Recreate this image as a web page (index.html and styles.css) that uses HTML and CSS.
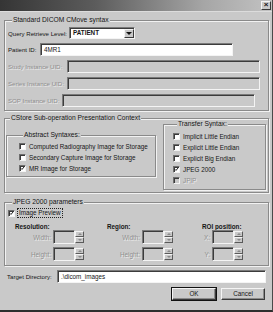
FILE: index.html
```html
<!DOCTYPE html>
<html lang="en">
<head>
    <meta charset="UTF-8">
    <title>DICOM CMove</title>
    <link rel="stylesheet" href="styles.css">
</head>
<body>

<div class="window">
    <div class="titlebar"><span class="close">&#215;</span></div>

    <div class="content">
        <fieldset class="group g-cmove">
            <legend>Standard DICOM CMove syntax</legend>
            <div class="row">
                <span class="lbl w-qrl">Query Retrieve Level:</span>
                <div class="select">PATIENT<span class="drop"><span class="tri"></span></span></div>
            </div>
            <div class="row">
                <span class="lbl w-pid">Patient ID:</span>
                <div class="field">4MR1</div>
            </div>
            <div class="row">
                <span class="lbl w-uid off">Study Instance UID:</span>
                <div class="field dis"></div>
            </div>
            <div class="row">
                <span class="lbl w-uid off">Series Instance UID:</span>
                <div class="field dis"></div>
            </div>
            <div class="row">
                <span class="lbl w-sop off">SOP Instance UID:</span>
                <div class="field dis"></div>
            </div>
        </fieldset>

        <fieldset class="group g-cstore">
            <legend>CStore Sub-operation Presentation Context</legend>
            <div class="split">
                <fieldset class="group g-abstract">
                    <legend>Abstract Syntaxes:</legend>
                    <div class="check"><span class="box"></span>Computed Radiography Image for Storage</div>
                    <div class="check"><span class="box"></span>Secondary Capture Image for Storage</div>
                    <div class="check"><span class="box"><svg viewBox="0 0 7 7"><polyline points="1.3,3.2 2.8,4.8 5.6,1.4"/></svg></span>MR Image for Storage</div>
                </fieldset>
                <fieldset class="group g-transfer">
                    <legend>Transfer Syntax:</legend>
                    <div class="check"><span class="box"></span>Implicit Little Endian</div>
                    <div class="check"><span class="box"></span>Explicit Little Endian</div>
                    <div class="check"><span class="box"></span>Explicit Big Endian</div>
                    <div class="check"><span class="box"><svg viewBox="0 0 7 7"><polyline points="1.3,3.2 2.8,4.8 5.6,1.4"/></svg></span>JPEG 2000</div>
                    <div class="check off"><span class="box dis"></span>JPIP</div>
                </fieldset>
            </div>
        </fieldset>

        <fieldset class="group g-jpeg">
            <legend>JPEG 2000 parameters</legend>
            <div class="check preview"><span class="box"><svg viewBox="0 0 7 7"><polyline points="1.3,3.2 2.8,4.8 5.6,1.4"/></svg></span><span class="focus">Image Preview</span></div>
            <div class="cols">
                <div class="col c-res">
                    <div class="head">Resolution:</div>
                    <div class="spin-row"><span class="slbl off">Width:</span><span class="spin"><span class="sbox"></span><span class="arrows"><span class="up"></span><span class="down"></span></span></span></div>
                    <div class="spin-row"><span class="slbl off">Height:</span><span class="spin"><span class="sbox"></span><span class="arrows"><span class="up"></span><span class="down"></span></span></span></div>
                </div>
                <div class="col c-reg">
                    <div class="head">Region:</div>
                    <div class="spin-row"><span class="slbl off">Width:</span><span class="spin"><span class="sbox"></span><span class="arrows"><span class="up"></span><span class="down"></span></span></span></div>
                    <div class="spin-row"><span class="slbl off">Height:</span><span class="spin"><span class="sbox"></span><span class="arrows"><span class="up"></span><span class="down"></span></span></span></div>
                </div>
                <div class="col c-roi">
                    <div class="head">ROI position:</div>
                    <div class="spin-row"><span class="slbl off">X:</span><span class="spin"><span class="sbox"></span><span class="arrows"><span class="up"></span><span class="down"></span></span></span></div>
                    <div class="spin-row"><span class="slbl off">Y:</span><span class="spin"><span class="sbox"></span><span class="arrows"><span class="up"></span><span class="down"></span></span></span></div>
                </div>
            </div>
        </fieldset>

        <div class="target">
            <span class="lbl w-tgt">Target Directory:</span>
            <div class="field f-tgt">.\dicom_images</div>
        </div>

        <div class="buttons">
            <div class="btn default">OK</div>
            <div class="btn">Cancel</div>
        </div>
    </div>
</div>

</body>
</html>
```

FILE: styles.css
```css
* {
    box-sizing: border-box;
    margin: 0;
    padding: 0;
}
body {
    width: 273px;
    height: 312px;
    overflow: hidden;
    background: #c9c9c9;
    font-family: 'Liberation Sans', Arial, sans-serif;
    font-size: 6.3px;
    color: #151515;
}
.window {
    height: 312px;
    display: flex;
    flex-direction: column;
    border-right: 1px solid #4a4a4a;
    border-bottom: 2px solid #2e2e2e;
}
.titlebar {
    height: 12px;
    flex: none;
    display: flex;
    justify-content: flex-end;
    align-items: center;
    padding-right: 1px;
    background: linear-gradient(to right, #353535, #5c5c5c 35%, #a6a6a6 75%, #c2c2c2);
    border-bottom: 1px solid #dcdcdc;
}
.close {
    width: 10px;
    height: 9px;
    background: #c9c9c9;
    border: 1px solid;
    border-color: #f4f4f4 #3a3a3a #3a3a3a #f4f4f4;
    font-size: 8px;
    line-height: 6px;
    text-align: center;
    font-weight: bold;
}
.content {
    display: flex;
    flex-direction: column;
    padding: 4px 4px 0 4px;
}

/* etched group boxes */
.group {
    border: 1px solid #8a8a8a;
    box-shadow: inset 1px 1px 0 #f2f2f2, 1px 1px 0 #f2f2f2;
}
.group legend {
    margin-left: 4px;
    padding: 0 1px;
    font-size: 6.7px;
    line-height: 8px;
    background: #c9c9c9;
}
.g-cmove {
    width: 265px;
    padding: 3px 0 3px 3px;
}
.g-cstore {
    width: 265px;
    margin-top: 3px;
    padding: 0 0 2px 1px;
}
.g-jpeg {
    width: 265px;
    margin-top: 5px;
    padding: 2px 0 4px 3px;
}
.split {
    display: flex;
    align-items: flex-start;
    margin-top: -2px;
}
.g-abstract {
    width: 150px;
    margin-top: 11px;
    padding: 2px 0 2px 12px;
}
.g-transfer {
    width: 103px;
    margin-left: 7px;
    padding: 3px 0 3px 9px;
}

/* text rows */
.row {
    display: flex;
    align-items: center;
    height: 13px;
    margin-bottom: 4px;
}
.row:first-of-type {
    height: 12px;
}
.row:last-child {
    margin-bottom: 0;
}
.lbl {
    flex: none;
    white-space: nowrap;
    font-size: 6.1px;
}
.w-qrl { width: 61px; }
.w-pid { width: 32px; }
.w-uid { width: 59px; }
.w-sop { width: 54px; }
.w-tgt { width: 50px; }
.off {
    color: #8e8e8e;
    text-shadow: 1px 1px 0 #ececec;
}
.field {
    width: 193px;
    height: 13px;
    padding: 0 3px;
    line-height: 11px;
    background: #fff;
    border: 1px solid;
    border-color: #7a7a7a #f4f4f4 #f4f4f4 #7a7a7a;
    box-shadow: inset 1px 1px 0 #3c3c3c;
}
.field.dis {
    background: #c9c9c9;
}
.select {
    position: relative;
    width: 66px;
    height: 12px;
    padding: 0 3px;
    line-height: 10px;
    font-weight: bold;
    background: #fff;
    border: 1px solid;
    border-color: #7a7a7a #f4f4f4 #f4f4f4 #7a7a7a;
    box-shadow: inset 1px 1px 0 #3c3c3c;
}
.drop {
    position: absolute;
    top: 1px;
    right: 0;
    width: 10px;
    height: 9px;
    background: #c9c9c9;
    border: 1px solid;
    border-color: #f4f4f4 #3a3a3a #3a3a3a #f4f4f4;
    display: flex;
    justify-content: center;
    align-items: center;
}
.tri {
    border-left: 3px solid transparent;
    border-right: 3px solid transparent;
    border-top: 3px solid #111;
}

/* checkboxes */
.check {
    display: flex;
    align-items: center;
    height: 11px;
    white-space: nowrap;
}
.box {
    flex: none;
    width: 7px;
    height: 7px;
    margin-right: 3px;
    background: #fff;
    border: 1px solid;
    border-color: #6e6e6e #f4f4f4 #f4f4f4 #6e6e6e;
    box-shadow: inset 1px 1px 0 #3a3a3a;
    display: flex;
}
.box svg {
    width: 5px;
    height: 5px;
    margin: 0;
}
.box polyline {
    fill: none;
    stroke: #111;
    stroke-width: 1.3;
}
.box.dis {
    background: #c9c9c9;
}
.preview {
    height: 10px;
    margin-left: 0;
}
.preview .box {
    margin-right: 2px;
}
.focus {
    padding: 0 1px;
    line-height: 8px;
    border: 1px dotted #222;
}

/* spinners */
.cols {
    display: flex;
    margin-top: 7px;
}
.col {
    display: flex;
    flex-direction: column;
    gap: 3px;
}
.c-res { margin-left: 7px; }
.c-reg { margin-left: 23px; }
.c-roi { margin-left: 29px; }
.head {
    height: 5px;
    line-height: 3px;
    font-weight: bold;
    margin-bottom: -3px;
}
.spin-row {
    display: flex;
    align-items: center;
    gap: 2px;
    height: 14px;
}
.slbl {
    text-align: right;
}
.c-res .slbl { width: 36px; }
.c-reg .slbl { width: 33px; }
.c-roi .slbl { width: 8px; }
.spin {
    display: flex;
    align-items: center;
    height: 14px;
}
.sbox {
    width: 22px;
    height: 14px;
    border: 1px solid;
    border-color: #7a7a7a #f4f4f4 #f4f4f4 #7a7a7a;
    box-shadow: inset 1px 1px 0 #3c3c3c;
}
.arrows {
    display: flex;
    flex-direction: column;
    width: 9px;
    height: 12px;
}
.arrows span {
    flex: 1;
    border: 1px solid;
    border-color: #f4f4f4 #5a5a5a #5a5a5a #f4f4f4;
    display: flex;
    justify-content: center;
    align-items: center;
}
.up::after {
    content: '';
    border-left: 2px solid transparent;
    border-right: 2px solid transparent;
    border-bottom: 2px solid #8a8a8a;
}
.down::after {
    content: '';
    border-left: 2px solid transparent;
    border-right: 2px solid transparent;
    border-top: 2px solid #8a8a8a;
}

/* bottom */
.target {
    display: flex;
    align-items: center;
    margin-top: 4px;
    padding-left: 3px;
    height: 13px;
}
.f-tgt {
    width: 209px;
}
.buttons {
    display: flex;
    justify-content: flex-end;
    gap: 5px;
    margin-top: 5px;
    padding-right: 3px;
}
.btn {
    width: 44px;
    height: 12px;
    text-align: center;
    line-height: 10px;
    border: 1px solid;
    border-color: #f4f4f4 #3a3a3a #3a3a3a #f4f4f4;
    box-shadow: inset -1px -1px 0 #8a8a8a;
}
.btn.default {
    outline: 1px solid #111;
}
```
